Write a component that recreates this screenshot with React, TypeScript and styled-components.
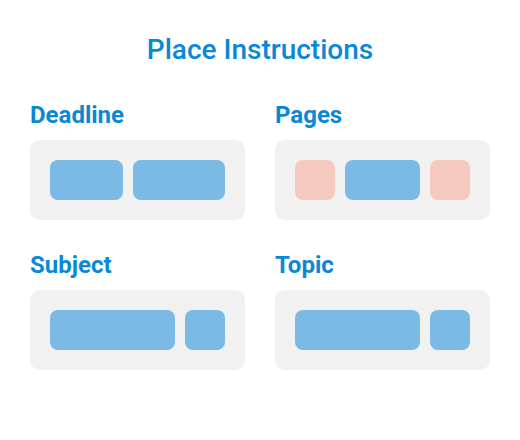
import styled, { createGlobalStyle } from 'styled-components';

const GlobalStyle = createGlobalStyle`
  body {
    margin: 0;
    background: #ffffff;
    font-family: Roboto, "Liberation Sans", sans-serif;
  }
`;

const sections = [
  { title: 'Deadline', blocks: [{ w: 73 }, { w: 92 }] },
  { title: 'Pages', blocks: [{ w: 40, pink: true }, { w: 75 }, { w: 40, pink: true }] },
  { title: 'Subject', blocks: [{ w: 125 }, { w: 40 }] },
  { title: 'Topic', blocks: [{ w: 125 }, { w: 40 }] },
];

function App() {
  return (
    <Page>
      <GlobalStyle />
      <Title>Place Instructions</Title>
      <Grid>
        {sections.map((s) => (
          <Section key={s.title}>
            <Heading>{s.title}</Heading>
            <Card>
              {s.blocks.map((b, i) => (
                <Block key={i} $width={b.w} $pink={b.pink} />
              ))}
            </Card>
          </Section>
        ))}
      </Grid>
    </Page>
  );
}

const Page = styled.div`
  width: 520px;
  height: 440px;
  padding-top: 34px;
  box-sizing: border-box;
`;

const Title = styled.h1`
  margin: 0;
  text-align: center;
  color: #0a88d6;
  font-size: 28px;
  font-weight: 500;
  line-height: 32px;
`;

const Grid = styled.div`
  display: grid;
  grid-template-columns: 215px 215px;
  column-gap: 30px;
  row-gap: 31px;
  padding: 35px 30px 0;
`;

const Section = styled.div`
  display: flex;
  flex-direction: column;
`;

const Heading = styled.h2`
  margin: 0 0 11px;
  color: #0a88d6;
  font-size: 24px;
  font-weight: 700;
  line-height: 28px;
`;

const Card = styled.div`
  display: flex;
  gap: 10px;
  height: 80px;
  padding: 20px;
  box-sizing: border-box;
  background: #f1f1f1;
  border-radius: 10px;
`;

const Block = styled.div<{ $width: number; $pink?: boolean }>`
  width: ${(p) => p.$width}px;
  height: 40px;
  border-radius: 8px;
  background: ${(p) => (p.$pink ? '#f6c9bf' : '#7bbae5')};
`;

export default App;
